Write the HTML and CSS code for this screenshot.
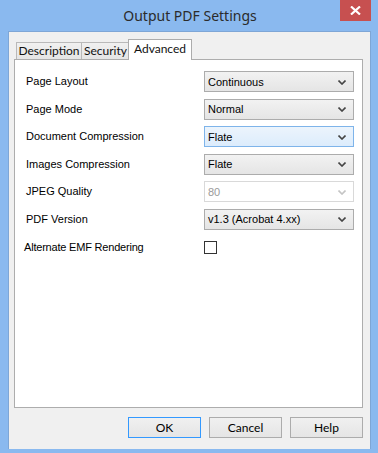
FILE: index.html
```html
<!DOCTYPE html>
<html>
<head>
<meta charset="utf-8">
<link rel="stylesheet" href="styles.css">
</head>
<body>
<div class="window">
  <div class="titlebar">
    <span class="title">Output PDF Settings</span>
    <div class="close"><svg width="11" height="9" viewBox="0 0 11 9"><path d="M1 0.5 L10 8.5 M10 0.5 L1 8.5" stroke="#fff" stroke-width="2.2" fill="none"/></svg></div>
  </div>
  <div class="client">
    <div class="tabs">
      <div class="tab">Description</div>
      <div class="tab">Security</div>
      <div class="tab active">Advanced</div>
    </div>
    <div class="panel">
      <div class="form">
        <div class="label">Page Layout</div>
        <div class="select"><span>Continuous</span><svg class="chev" width="8" height="5" viewBox="0 0 8 5"><path d="M0.5 0.5 L4 4 L7.5 0.5" stroke="#444" stroke-width="1.6" fill="none"/></svg></div>
        <div class="label">Page Mode</div>
        <div class="select"><span>Normal</span><svg class="chev" width="8" height="5" viewBox="0 0 8 5"><path d="M0.5 0.5 L4 4 L7.5 0.5" stroke="#444" stroke-width="1.6" fill="none"/></svg></div>
        <div class="label">Document Compression</div>
        <div class="select hover"><span>Flate</span><svg class="chev" width="8" height="5" viewBox="0 0 8 5"><path d="M0.5 0.5 L4 4 L7.5 0.5" stroke="#444" stroke-width="1.6" fill="none"/></svg></div>
        <div class="label">Images Compression</div>
        <div class="select"><span>Flate</span><svg class="chev" width="8" height="5" viewBox="0 0 8 5"><path d="M0.5 0.5 L4 4 L7.5 0.5" stroke="#444" stroke-width="1.6" fill="none"/></svg></div>
        <div class="label">JPEG Quality</div>
        <div class="select disabled"><span>80</span><svg class="chev" width="8" height="5" viewBox="0 0 8 5"><path d="M0.5 0.5 L4 4 L7.5 0.5" stroke="#c4c4c4" stroke-width="1.6" fill="none"/></svg></div>
        <div class="label">PDF Version</div>
        <div class="select"><span>v1.3 (Acrobat 4.xx)</span><svg class="chev" width="8" height="5" viewBox="0 0 8 5"><path d="M0.5 0.5 L4 4 L7.5 0.5" stroke="#444" stroke-width="1.6" fill="none"/></svg></div>
        <div class="label emf">Alternate EMF Rendering</div>
        <div class="checkcell"><div class="checkbox"></div></div>
      </div>
    </div>
    <div class="buttons">
      <div class="btn default">OK</div>
      <div class="btn">Cancel</div>
      <div class="btn">Help</div>
    </div>
  </div>
</div>
</body>
</html>
```
FILE: styles.css
```css
html, body {
  margin: 0;
  padding: 0;
}
body {
  width: 378px;
  height: 453px;
  overflow: hidden;
  background: #8ab9ef;
}
.window {
  width: 378px;
  height: 453px;
  box-sizing: border-box;
  background: #8ab9ef;
  padding: 0 7px 4px 8px;
  display: flex;
  flex-direction: column;
  position: relative;
}
.titlebar {
  height: 31px;
  display: flex;
  align-items: center;
  justify-content: center;
  flex: none;
}
.title {
  font-family: "Noto Sans", sans-serif;
  font-size: 14px;
  color: #2b2b2b;
  margin-top: -1px;
  margin-left: 1px;
}
.close {
  position: absolute;
  top: 0;
  right: 7px;
  width: 31px;
  height: 21px;
  background: #c75050;
  display: flex;
  align-items: center;
  justify-content: center;
}
.client {
  flex: 1;
  background: #f0f0f0;
  border: 1px solid #7ea6d6;
  border-bottom: none;
  padding: 6px 7px 0 5px;
  display: flex;
  flex-direction: column;
}
.tabs {
  display: flex;
  align-items: flex-end;
  height: 21px;
  padding-left: 2px;
  position: relative;
  z-index: 1;
}
.tab {
  font-family: Lato, sans-serif;
  font-size: 12px;
  color: #111;
  height: 17px;
  box-sizing: border-box;
  border: 1px solid #b9b9b9;
  border-bottom: none;
  background: linear-gradient(#f0f0f0, #e5e5e5);
  line-height: 16px;
  text-align: center;
  white-space: nowrap;
}
.tab + .tab {
  margin-left: -1px;
}
.tab:nth-child(1) { width: 66px; }
.tab:nth-child(2) { width: 49px; }
.tab.active {
  background: #fff;
  height: 21px;
  line-height: 17px;
  width: 64px;
  margin-left: -2px;
  border-color: #acacac;
  margin-bottom: -1px;
}
.panel {
  height: 349px;
  box-sizing: border-box;
  background: #fff;
  border: 1px solid #adadad;
  padding: 11px 8px 0 11px;
}
.form {
  display: grid;
  grid-template-columns: 1fr 150px;
  grid-auto-rows: 21px;
  row-gap: 6.6px;
  align-items: center;
}
.label {
  font-family: "Liberation Sans", Arial, sans-serif;
  font-size: 11px;
  color: #000;
  margin-top: -1px;
}
.label.emf {
  margin-left: -2px;
  letter-spacing: -0.2px;
}
.select {
  height: 21px;
  box-sizing: border-box;
  border: 1px solid #acacac;
  background: linear-gradient(#f2f2f2, #e5e5e5);
  display: flex;
  align-items: center;
  justify-content: space-between;
  padding: 0 7px 0 3px;
  font-family: "Liberation Sans", Arial, sans-serif;
  font-size: 11px;
  color: #000;
}
.select.hover {
  border-color: #7eb4ea;
  background: linear-gradient(#ecf4fc, #dcecfc);
}
.select.disabled {
  background: #fff;
  border-color: #d9d9d9;
  color: #9a9a9a;
}
.chev {
  display: block;
  margin-top: 1px;
}
.checkcell {
  display: flex;
  align-items: center;
}
.checkbox {
  width: 13px;
  height: 13px;
  box-sizing: border-box;
  border: 1px solid #333;
  background: #fff;
}
.buttons {
  display: flex;
  justify-content: flex-end;
  gap: 8px;
  padding-top: 9px;
  padding-right: 0;
}
.btn {
  width: 73px;
  height: 21px;
  box-sizing: border-box;
  border: 1px solid #acacac;
  background: linear-gradient(#f0f0f0, #e5e5e5);
  font-family: Lato, sans-serif;
  font-size: 12px;
  color: #000;
  display: flex;
  align-items: center;
  justify-content: center;
}
.btn.default {
  border-color: #3399ff;
}
```
